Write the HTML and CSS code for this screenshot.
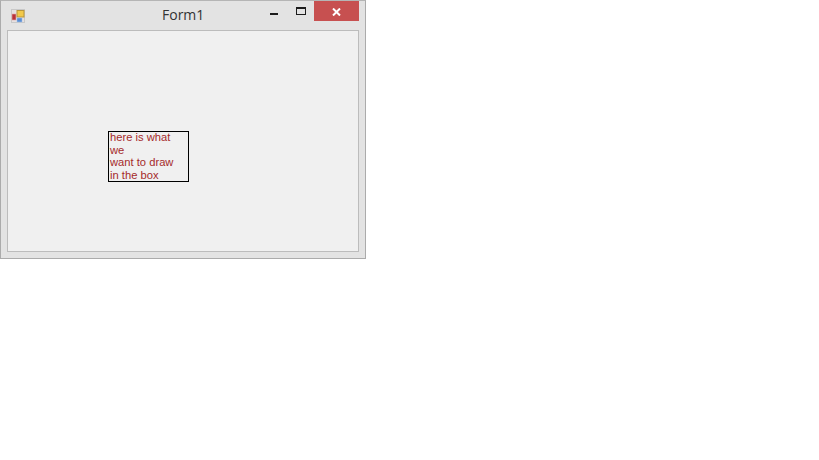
FILE: index.html
```html
<!DOCTYPE html>
<html lang="en">
<head>
    <meta charset="UTF-8">
    <title>Form1</title>
    <link rel="stylesheet" href="styles.css">
</head>
<body>
    <div class="window">
        <div class="titlebar">
            <svg class="app-icon" width="14" height="14" viewBox="0 0 14 14">
                <rect x="0.5" y="0.5" width="13" height="13" fill="#e6e0e0" stroke="#c8c8c8"/>
                <rect x="1" y="5" width="4" height="6" fill="#b8323a" stroke="#e4aaaa" stroke-width="0.6"/>
                <rect x="6" y="1.5" width="7" height="6.5" fill="#f2c94a" stroke="#b8953a"/>
                <rect x="6" y="9" width="5" height="4" fill="#5a8ed4" stroke="#a8c4e8" stroke-width="0.5"/>
            </svg>
            <div class="title">Form1</div>
            <div class="controls">
                <div class="btn-min"><span></span></div>
                <div class="btn-max"><span></span></div>
                <div class="btn-close">
                    <svg width="9" height="8" viewBox="0 0 9 8">
                        <path d="M1 0.5 L8 7.5 M8 0.5 L1 7.5" stroke="#fff" stroke-width="2" fill="none"/>
                    </svg>
                </div>
            </div>
        </div>
        <div class="client">
            <div class="drawbox">
                <div class="drawtext">here is what<br>we<br>want to draw<br>in the box</div>
            </div>
        </div>
    </div>
</body>
</html>
```

FILE: styles.css
```css
* {
    margin: 0;
    padding: 0;
    box-sizing: border-box;
}

body {
    background: #fff;
    font-family: 'Liberation Sans', Arial, sans-serif;
}

.window {
    width: 366px;
    height: 259px;
    background: #e3e3e3;
    border: 1px solid #ababab;
    border-top-color: #b5b5b5;
    padding: 0 6px 6px 6px;
    display: flex;
    flex-direction: column;
}

.titlebar {
    height: 29px;
    display: flex;
    align-items: flex-start;
    flex: none;
}

.app-icon {
    margin: 8px 0 0 4px;
    flex: none;
}

.title {
    font-family: 'Open Sans', sans-serif;
    font-size: 14px;
    line-height: 20px;
    color: #333;
    margin: 4px 0 0 137px;
}

.controls {
    display: flex;
    margin-left: auto;
}

.btn-min, .btn-max {
    height: 20px;
    display: flex;
    justify-content: center;
}

.btn-min {
    width: 26px;
}

.btn-min span {
    width: 8px;
    height: 2px;
    background: #1c1c1c;
    margin-top: 12px;
}

.btn-max {
    width: 27px;
}

.btn-max span {
    width: 10px;
    height: 8px;
    border: 1px solid #1c1c1c;
    border-top-width: 2px;
    margin-top: 6px;
}

.btn-close {
    width: 45px;
    height: 20px;
    background: #c75050;
    display: flex;
    align-items: center;
    justify-content: center;
    padding-top: 1px;
}

.client {
    flex: 1;
    background: #f0f0f0;
    border: 1px solid #bcbcbc;
    padding: 100px 0 0 100px;
}

.drawbox {
    width: 81px;
    height: 51px;
    border: 1px solid #000;
    padding-left: 1px;
    color: #a52a2a;
    font-size: 11.2px;
    line-height: 12.6px;
}

.drawtext {
    margin-top: -1px;
}
```
